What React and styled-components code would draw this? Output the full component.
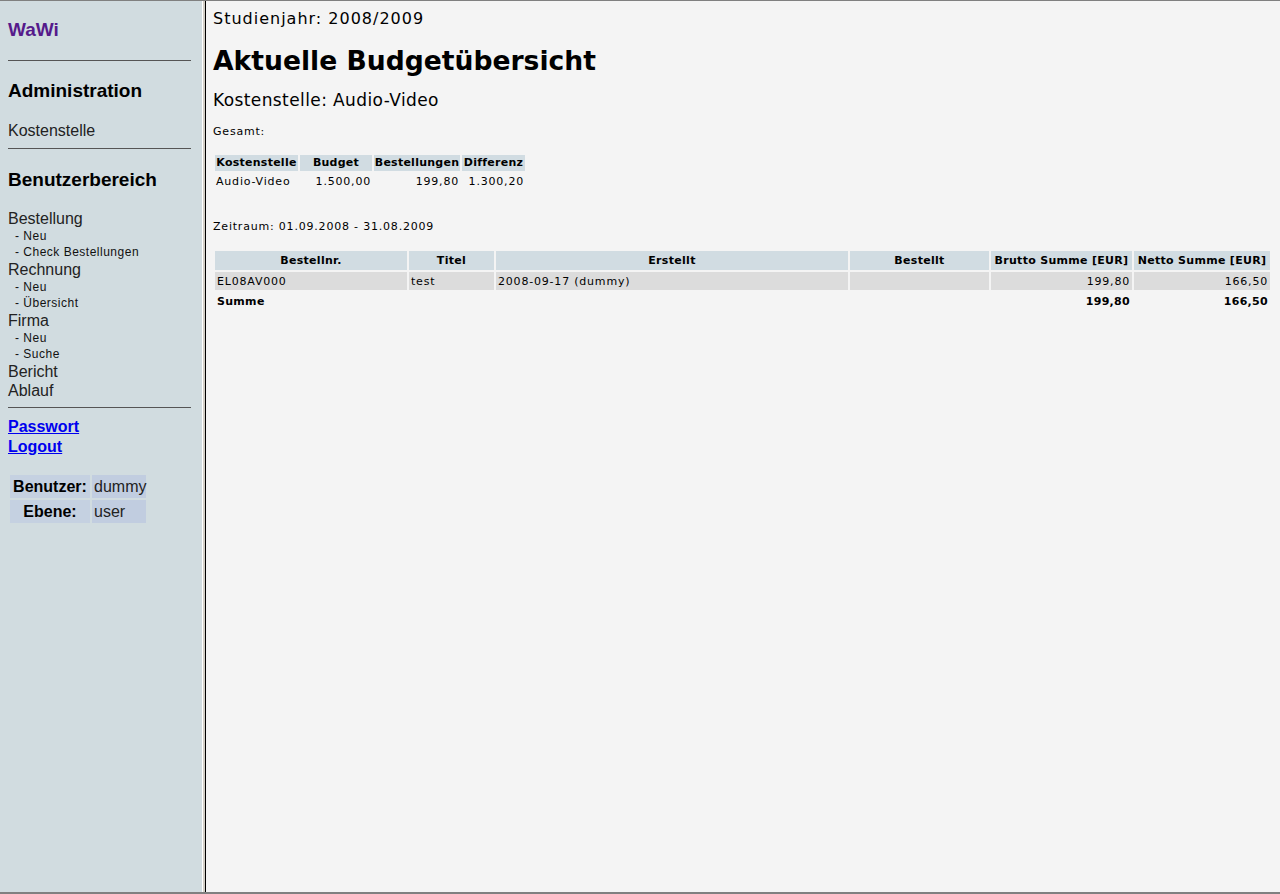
import styled, { createGlobalStyle } from 'styled-components';

const GlobalStyle = createGlobalStyle`
    html, body {
        margin: 0;
        padding: 0;
        background: #f4f4f4;
    }
`

const adminLinks = ['Kostenstelle'];

const userMenu = [
    { label: 'Bestellung', sub: ['- Neu', '- Check Bestellungen'] },
    { label: 'Rechnung', sub: ['- Neu', '- Übersicht'] },
    { label: 'Firma', sub: ['- Neu', '- Suche'] },
    { label: 'Bericht', sub: [] },
    { label: 'Ablauf', sub: [] },
];

const orders = [
    { nr: 'EL08AV000', title: 'test', created: '2008-09-17 (dummy)', ordered: '', brutto: '199,80', netto: '166,50' },
];

function Sidebar() {
    return <SideFrame>
        <Brand href="#">WaWi</Brand>
        <Rule />
        <SectionTitle>Administration</SectionTitle>
        {adminLinks.map(l => <MenuItem key={l} $top={19}>{l}</MenuItem>)}
        <Rule $top={8} />
        <SectionTitle $top={20}>Benutzerbereich</SectionTitle>
        <Menu>
            {userMenu.map(item => <div key={item.label}>
                <MenuItem>{item.label}</MenuItem>
                {item.sub.map(s => <SubItem key={s}>{s}</SubItem>)}
            </div>)}
        </Menu>
        <Rule $top={7} />
        <UserLinks>
            <UserLink href="#">Passwort</UserLink>
            <UserLink href="#">Logout</UserLink>
        </UserLinks>
        <InfoTable>
            <colgroup>
                <col style={{ width: 80 }} />
                <col style={{ width: 54 }} />
            </colgroup>
            <tbody>
                <tr><InfoLabel>Benutzer:</InfoLabel><InfoValue>dummy</InfoValue></tr>
                <tr><InfoLabel>Ebene:</InfoLabel><InfoValue>user</InfoValue></tr>
            </tbody>
        </InfoTable>
    </SideFrame>
}

function Budget() {
    return <MainFrame>
        <Year>Studienjahr: 2008/2009</Year>
        <Title>Aktuelle Budgetübersicht</Title>
        <SubTitle>Kostenstelle: Audio-Video</SubTitle>
        <Small>Gesamt:</Small>
        <SummaryTable>
            <colgroup>
                <col style={{ width: 83 }} />
                <col style={{ width: 72 }} />
                <col style={{ width: 86 }} />
                <col style={{ width: 63 }} />
            </colgroup>
            <thead>
                <tr>
                    <Head>Kostenstelle</Head>
                    <Head>Budget</Head>
                    <Head>Bestellungen</Head>
                    <Head>Differenz</Head>
                </tr>
            </thead>
            <tbody>
                <tr>
                    <Cell>Audio-Video</Cell>
                    <Cell $right>1.500,00</Cell>
                    <Cell $right>199,80</Cell>
                    <Cell $right>1.300,20</Cell>
                </tr>
            </tbody>
        </SummaryTable>
        <Period>Zeitraum: 01.09.2008 - 31.08.2009</Period>
        <OrderTable>
            <colgroup>
                <col style={{ width: 192 }} />
                <col style={{ width: 85 }} />
                <col style={{ width: 352 }} />
                <col style={{ width: 139 }} />
                <col style={{ width: 141 }} />
                <col />
            </colgroup>
            <thead>
                <tr>
                    <OrderHead>Bestellnr.</OrderHead>
                    <OrderHead>Titel</OrderHead>
                    <OrderHead>Erstellt</OrderHead>
                    <OrderHead>Bestellt</OrderHead>
                    <OrderHead>Brutto Summe [EUR]</OrderHead>
                    <OrderHead>Netto Summe [EUR]</OrderHead>
                </tr>
            </thead>
            <tbody>
                {orders.map(o => <OrderRow key={o.nr}>
                    <OrderCell>{o.nr}</OrderCell>
                    <OrderCell>{o.title}</OrderCell>
                    <OrderCell>{o.created}</OrderCell>
                    <OrderCell>{o.ordered}</OrderCell>
                    <OrderCell $right>{o.brutto}</OrderCell>
                    <OrderCell $right>{o.netto}</OrderCell>
                </OrderRow>)}
                <tr>
                    <SumCell>Summe</SumCell>
                    <SumCell></SumCell>
                    <SumCell></SumCell>
                    <SumCell></SumCell>
                    <SumCell $right>199,80</SumCell>
                    <SumCell $right>166,50</SumCell>
                </tr>
            </tbody>
        </OrderTable>
    </MainFrame>
}

function App() {
    return <>
        <GlobalStyle />
        <Frameset>
            <Sidebar />
            <Divider />
            <Budget />
        </Frameset>
    </>
}
export default App;

const Frameset = styled.div`
    display: flex;
    height: 894px;
    box-sizing: border-box;
    border-top: 1px solid #808080;
    border-bottom: 2px solid #808080;
    overflow: hidden;
`

const SideFrame = styled.div`
    width: 202px;
    flex-shrink: 0;
    box-sizing: border-box;
    padding: 18px 11px 0 8px;
    background: #d1dce0;
    font-family: "Liberation Sans", Arial, sans-serif;
    color: #1a1a1a;
`

const Divider = styled.div`
    width: 2px;
    flex-shrink: 0;
    background: #d4d0c8;
    border-left: 1px solid #ffffff;
`

const Brand = styled.a`
    display: block;
    font-size: 19px;
    line-height: 22px;
    font-weight: bold;
    color: #551a8b;
    text-decoration: none;
`

const Rule = styled.div`
    height: 1px;
    background: #555;
    margin-top: ${p => p.$top ?? 19}px;
`

const SectionTitle = styled.div`
    font-size: 19px;
    line-height: 22px;
    font-weight: bold;
    color: #000;
    margin-top: ${p => p.$top ?? 19}px;
`

const Menu = styled.div`
    margin-top: 18px;
`

const MenuItem = styled.div`
    font-size: 16px;
    line-height: 19px;
    color: #222;
    margin-top: ${p => p.$top ?? 0}px;
`

const SubItem = styled.div`
    font-size: 12px;
    line-height: 16px;
    letter-spacing: 0.5px;
    color: #111;
    padding-left: 7px;
`

const UserLinks = styled.div`
    display: flex;
    flex-direction: column;
    margin-top: 9px;
`

const UserLink = styled.a`
    font-size: 16px;
    line-height: 20px;
    font-weight: bold;
    color: #0000ee;
    text-decoration: underline;
    align-self: flex-start;
`

const InfoTable = styled.table`
    margin-top: 16px;
    border-spacing: 2px;
    table-layout: fixed;
    width: 138px;
    font-size: 16px;
`

const InfoLabel = styled.th`
    height: 23px;
    padding: 0 1px;
    background: #c5d1e1;
    color: #000;
    text-align: center;
    white-space: nowrap;
`

const InfoValue = styled.td`
    height: 23px;
    padding: 0 2px;
    background: #c1cde0;
    color: #222;
`

const MainFrame = styled.div`
    flex: 1;
    box-sizing: border-box;
    padding: 8px 8px 0 7px;
    border-left: 1px solid #000;
    background: #f4f4f4;
    font-family: "DejaVu Sans", Verdana, sans-serif;
    color: #000;
`

const Year = styled.div`
    font-size: 16px;
    line-height: 20px;
    letter-spacing: 1px;
`

const Title = styled.h1`
    margin: 15px 0 0;
    font-size: 26.6px;
    line-height: 33px;
    font-weight: bold;
`

const SubTitle = styled.div`
    margin-top: 13px;
    font-size: 17px;
    line-height: 20px;
    letter-spacing: 0.4px;
`

const Small = styled.div`
    margin-top: 15px;
    font-size: 11px;
    line-height: 14px;
    letter-spacing: 0.8px;
`

const SummaryTable = styled.table`
    margin-top: 14px;
    border-spacing: 2px;
    table-layout: fixed;
    width: 312px;
    font-size: 11px;
`

const Head = styled.th`
    padding: 1px 0;
    line-height: 14px;
    background: #d1dce2;
    font-weight: bold;
    letter-spacing: 0.25px;
    text-align: center;
    white-space: nowrap;
`

const Cell = styled.td`
    padding: 2px 1px 1px;
    line-height: 14px;
    letter-spacing: 0.8px;
    white-space: nowrap;
    text-align: ${p => p.$right ? 'right' : 'left'};
`

const Period = styled.div`
    margin-top: 28px;
    font-size: 11px;
    line-height: 14px;
    letter-spacing: 0.8px;
`

const OrderTable = styled.table`
    width: 100%;
    margin-top: 15px;
    border-spacing: 2px;
    table-layout: fixed;
    font-size: 11px;
`

const OrderHead = styled.th`
    height: 19px;
    padding: 0 2px;
    background: #d1dce2;
    font-weight: bold;
    letter-spacing: 0.3px;
    text-align: center;
    white-space: nowrap;
`

const OrderRow = styled.tr`
    background: #dcdcdc;
`

const OrderCell = styled.td`
    height: 18px;
    padding: 0 2px;
    letter-spacing: 0.8px;
    text-align: ${p => p.$right ? 'right' : 'left'};
`

const SumCell = styled.td`
    height: 18px;
    padding: 0 2px;
    font-weight: bold;
    letter-spacing: 0.3px;
    text-align: ${p => p.$right ? 'right' : 'left'};
`
